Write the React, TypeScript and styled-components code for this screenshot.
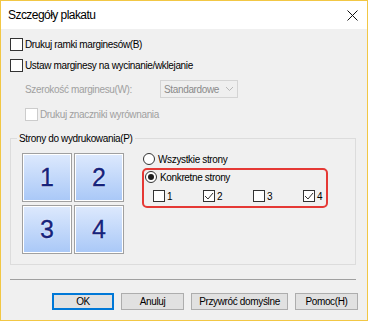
import React from "react";
import styled, { createGlobalStyle } from "styled-components";

const GlobalStyle = createGlobalStyle`
  body {
    margin: 0;
    background: #ffffff;
    font-family: "Liberation Sans", Arial, sans-serif;
    font-size: 10px;
    letter-spacing: -0.35px;
    color: #000000;
  }
`;

const Window = styled.div`
  width: 368px;
  height: 321px;
  box-sizing: border-box;
  border: 1px solid #f2c744;
  background: #f0f0f0;
  display: flex;
  flex-direction: column;
`;

const TitleBar = styled.div`
  height: 28px;
  background: #ffffff;
  display: flex;
  align-items: center;
  justify-content: space-between;
  padding: 0 9px 0 7px;
  font-size: 12px;
  letter-spacing: -0.55px;
`;

const Body = styled.div`
  display: flex;
  flex-direction: column;
  padding: 0 9px 0 9px;
`;

const Row = styled.div<{ $top: number; $indent?: number }>`
  display: flex;
  align-items: center;
  height: 14px;
  margin-top: ${(p) => p.$top}px;
  padding-left: ${(p) => p.$indent || 0}px;
  gap: 2px;
`;

const Label = styled.span<{ $disabled?: boolean }>`
  color: ${(p) => (p.$disabled ? "#a0a0a0" : "#000000")};
  white-space: nowrap;
`;

const Box = styled.span<{ $disabled?: boolean; $size?: number }>`
  width: ${(p) => p.$size || 13}px;
  height: ${(p) => p.$size || 13}px;
  box-sizing: border-box;
  border: 1px solid ${(p) => (p.$disabled ? "#cccccc" : "#333333")};
  background: #ffffff;
  display: flex;
  align-items: center;
  justify-content: center;
  flex-shrink: 0;
`;

const SelectRow = styled.div`
  display: flex;
  align-items: center;
  height: 18px;
  margin-top: 8px;
  padding-left: 15px;
`;

const SelectLabel = styled(Label)`
  width: 135px;
`;

const Select = styled.div`
  width: 78px;
  height: 18px;
  box-sizing: border-box;
  border: 1px solid #d4d4d4;
  background: #efefef;
  display: flex;
  align-items: center;
  justify-content: space-between;
  padding: 0 3px 0 3px;
  color: #8a8a8a;
`;

const Group = styled.div`
  position: relative;
  margin-top: 17px;
  margin-right: 2px;
  height: 127px;
  box-sizing: border-box;
  border: 1px solid #dcdcdc;
  padding: 14px 0 0 11px;
  display: flex;
  gap: 18px;
`;

const GroupTitle = styled.span`
  position: absolute;
  top: -7px;
  left: 6px;
  padding: 0 2px;
  background: #f0f0f0;
  line-height: 13px;
`;

const Tiles = styled.div`
  display: grid;
  grid-template-columns: 50px 50px;
  grid-auto-rows: 49px;
  column-gap: 2px;
  row-gap: 3px;
`;

const Tile = styled.div`
  box-sizing: border-box;
  border: 1px solid #a0a0a0;
  box-shadow: inset 0 0 0 1px #ffffff;
  background: linear-gradient(#dde9fd, #a9c8f7);
  display: flex;
  align-items: center;
  justify-content: center;
  font-size: 25px;
  letter-spacing: 0;
  color: #16237c;
  -webkit-text-stroke: 0.35px #16237c;
  text-shadow: 0 0 2px #ffffff, 0 0 1px #ffffff;
`;

const Choices = styled.div`
  display: flex;
  flex-direction: column;
`;

const RadioRow = styled.div`
  display: flex;
  align-items: center;
  height: 12px;
  padding-left: 1px;
  gap: 3px;
`;

const Radio = styled.span<{ $on?: boolean }>`
  width: 12px;
  height: 12px;
  box-sizing: border-box;
  border-radius: 50%;
  border: 1px solid #333333;
  background: #ffffff;
  display: flex;
  align-items: center;
  justify-content: center;

  &::after {
    content: "";
    width: 6px;
    height: 6px;
    border-radius: 50%;
    background: ${(p) => (p.$on ? "#1e1e1e" : "transparent")};
  }
`;

const Highlight = styled.div`
  margin-top: 3px;
  width: 186px;
  box-sizing: border-box;
  border: 2px solid #e53935;
  border-radius: 5px;
  padding: 1px 0 4px 0;
`;

const PageChecks = styled.div`
  display: grid;
  grid-template-columns: repeat(4, 50px);
  margin-top: 7px;
  padding-left: 9px;
`;

const PageCheck = styled.div`
  display: flex;
  align-items: center;
  gap: 2px;
  height: 12px;
`;

const Separator = styled.div`
  margin-top: 14px;
  margin-right: 2px;
  border-top: 1px solid #a0a0a0;
`;

const Buttons = styled.div`
  display: flex;
  justify-content: flex-end;
  gap: 7px;
  margin-top: 13px;
`;

const Button = styled.button<{ $w: number; $default?: boolean }>`
  width: ${(p) => p.$w}px;
  height: 17px;
  box-sizing: border-box;
  padding: 0;
  font-family: inherit;
  font-size: 10px;
  font-weight: normal;
  letter-spacing: inherit;
  white-space: nowrap;
  color: #000000;
  background: #e1e1e1;
  border: 1px solid ${(p) => (p.$default ? "#0078d7" : "#adadad")};
  box-shadow: ${(p) => (p.$default ? "inset 0 0 0 1px #0078d7" : "none")};
`;

const Check = () => (
  <svg width="10" height="10" viewBox="0 0 10 10">
    <polyline points="1,5 4,8 9,2" fill="none" stroke="#333333" strokeWidth="1" />
  </svg>
);

const CheckBox = ({ checked, disabled, size }: { checked?: boolean; disabled?: boolean; size?: number }) => (
  <Box $disabled={disabled} $size={size}>
    {checked && <Check />}
  </Box>
);

const pages = [
  { n: "1", on: false },
  { n: "2", on: true },
  { n: "3", on: false },
  { n: "4", on: true },
];

export default function App() {
  return (
    <>
      <GlobalStyle />
      <Window>
        <TitleBar>
          <span>Szczegóły plakatu</span>
          <svg width="11" height="11" viewBox="0 0 11 11">
            <path d="M0.5 0.5 L10.5 10.5 M10.5 0.5 L0.5 10.5" stroke="#111111" strokeWidth="1" />
          </svg>
        </TitleBar>
        <Body>
          <Row $top={8}>
            <CheckBox />
            <Label>Drukuj ramki marginesów(B)</Label>
          </Row>
          <Row $top={7}>
            <CheckBox />
            <Label>Ustaw marginesy na wycinanie/wklejanie</Label>
          </Row>
          <SelectRow>
            <SelectLabel $disabled>Szerokość marginesu(W):</SelectLabel>
            <Select>
              <span>Standardowe</span>
              <svg width="9" height="6" viewBox="0 0 9 6">
                <polyline points="1,1 4.5,4.5 8,1" fill="none" stroke="#b8b8b8" strokeWidth="1" />
              </svg>
            </Select>
          </SelectRow>
          <Row $top={9} $indent={15}>
            <CheckBox disabled />
            <Label $disabled>Drukuj znaczniki wyrównania</Label>
          </Row>
          <Group>
            <GroupTitle>Strony do wydrukowania(P)</GroupTitle>
            <Tiles>
              {pages.map((p) => (
                <Tile key={p.n}>{p.n}</Tile>
              ))}
            </Tiles>
            <Choices>
              <RadioRow>
                <Radio />
                <Label>Wszystkie strony</Label>
              </RadioRow>
              <Highlight>
                <RadioRow>
                  <Radio $on />
                  <Label>Konkretne strony</Label>
                </RadioRow>
                <PageChecks>
                  {pages.map((p) => (
                    <PageCheck key={p.n}>
                      <CheckBox checked={p.on} size={12} />
                      <Label>{p.n}</Label>
                    </PageCheck>
                  ))}
                </PageChecks>
              </Highlight>
            </Choices>
          </Group>
          <Separator />
          <Buttons>
            <Button $w={62} $default>OK</Button>
            <Button $w={63}>Anuluj</Button>
            <Button $w={97}>Przywróć domyślne</Button>
            <Button $w={63}>Pomoc(H)</Button>
          </Buttons>
        </Body>
      </Window>
    </>
  );
}
